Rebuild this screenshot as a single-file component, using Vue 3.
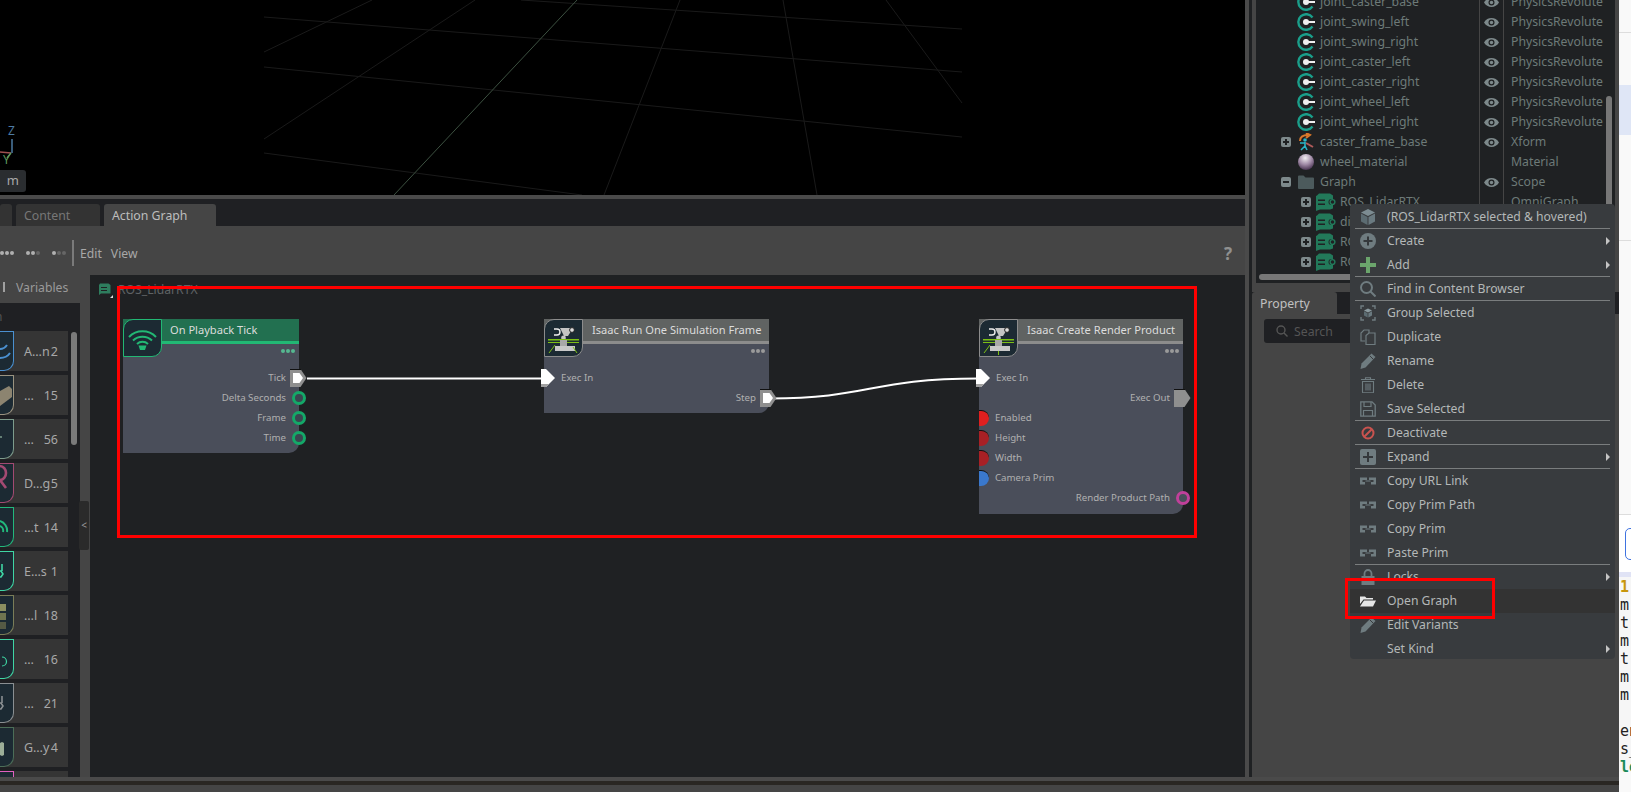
<script setup>
const G = '#6f7c80'
const icons = {
  cube: [
    { d: 'M8 0L15 3.5 8 7 1 3.5Z', f: '#7c8c92' },
    { d: 'M1 4.5L7.5 8V16L1 12.5Z', f: '#5c6c72' },
    { d: 'M8.5 8L15 4.5V12.5L8.5 16Z', f: '#6a7a80' }
  ],
  create: [
    { d: 'M8 0a8 8 0 1 0 0 16a8 8 0 1 0 0-16Z', f: G },
    { d: 'M7 3.5h2V7h3.5v2H9v3.5H7V9H3.5V7H7Z', f: '#34383b' }
  ],
  add: [{ d: 'M6 0h4v6h6v4h-6v6H6v-6H0V6h6Z', f: '#6ba56c' }],
  find: [
    { d: 'M6.5 1a5.5 5.5 0 1 0 0 11a5.5 5.5 0 1 0 0-11Z', s: G, w: 2 },
    { d: 'M10.5 10.5L15.5 15.5', s: G, w: 2 }
  ],
  group: [
    { d: 'M1 4V1h3M12 1h3v3M15 12v3h-3M4 15H1v-3', s: G, w: 1.4 },
    { d: 'M8 3.5L12 5.5 8 7.5 4 5.5Z', f: '#8a9a9f' },
    { d: 'M4 6.2L7.6 8.2V12.5L4 10.5Z', f: '#5c6c72' },
    { d: 'M8.4 8.2L12 6.2V10.5L8.4 12.5Z', f: '#6a7a80' }
  ],
  dup: [
    { d: 'M1 9V4L4 1h5v3', s: G, w: 1.2 },
    { d: 'M1 9v3h4', s: G, w: 1.2 },
    { d: 'M6 6.5L9 4h6v11.5H6Z', s: G, w: 1.2 }
  ],
  pencil: [
    { d: 'M11.5 0.5L15.5 4 5.5 14.5 0.5 16 1.5 10.5Z', f: G },
    { d: 'M10 3L13.5 6.5', s: '#383b3e', w: 1 }
  ],
  trash: [
    { d: 'M2.5 4.5h11V15a.8.8 0 0 1-.8.8H3.3a.8.8 0 0 1-.8-.8Z', s: G, w: 1.1 },
    { d: 'M1 2.5h14M5.5 2.5V.8h5v1.7M6 6.5v7M8 6.5v7M10 6.5v7', s: G, w: 1.1 }
  ],
  save: [
    { d: 'M.8.8H12L15.2 4V15.2H.8Z', s: G, w: 1.3 },
    { d: 'M4 1v4.5h7V1M3.5 15V9.5h9V15', s: G, w: 1.2 }
  ],
  stop: [
    { d: 'M8 2.5a5.500 5.500 0 1 0 0 11a5.500 5.500 0 1 0 0-11Z', s: '#c9534f', w: 2 },
    { d: 'M4.200 11.800L11.800 4.200', s: '#c9534f', w: 2 }
  ],
  expand: [
    { d: 'M2 0h12a2 2 0 0 1 2 2v12a2 2 0 0 1-2 2H2a2 2 0 0 1-2-2V2a2 2 0 0 1 2-2Z', f: G },
    { d: 'M7 3h2v4h4v2H9v4H7V9H3V7h4Z', f: '#34383b' }
  ],
  link: [
    { d: 'M0 4.5h7V7H2.5v2H5v2.5H0Z', f: G },
    { d: 'M16 4.5H9V7h4.5v2H11v2.5h5Z', f: G },
    { d: 'M5.5 7.5h5v1h-5Z', f: G }
  ],
  lock: [
    { d: 'M1.5 7h13v9h-13Z', f: G },
    { d: 'M4.5 7V4.5a3.5 3.5 0 0 1 7 0V7', s: G, w: 1.8 }
  ],
  open: [
    { d: 'M0 3.5h5l1.5 1.5H13v1.5H3.5L0 11Z', f: '#e6e6e6' },
    { d: 'M4 7.5h12L13 13.5H0Z', f: '#e6e6e6' }
  ]
}

const menu = [
  { t: '(ROS_LidarRTX selected & hovered)', i: 'cube', sep: 1 },
  { t: 'Create', i: 'create', sub: 1 },
  { t: 'Add', i: 'add', sub: 1, sep: 1 },
  { t: 'Find in Content Browser', i: 'find', sep: 1 },
  { t: 'Group Selected', i: 'group' },
  { t: 'Duplicate', i: 'dup' },
  { t: 'Rename', i: 'pencil' },
  { t: 'Delete', i: 'trash' },
  { t: 'Save Selected', i: 'save', sep: 1 },
  { t: 'Deactivate', i: 'stop', sep: 1 },
  { t: 'Expand', i: 'expand', sub: 1, sep: 1 },
  { t: 'Copy URL Link', i: 'link' },
  { t: 'Copy Prim Path', i: 'link' },
  { t: 'Copy Prim', i: 'link' },
  { t: 'Paste Prim', i: 'link', sep: 1 },
  { t: 'Locks', i: 'lock', sub: 1 },
  { t: 'Open Graph', i: 'open', hover: 1 },
  { t: 'Edit Variants', i: 'pencil' },
  { t: 'Set Kind', sub: 1 }
]

const P = 'PhysicsRevolute'
const tree = [
  { n: 'joint_caster_base', k: 'joint', eye: 1, ty: P },
  { n: 'joint_swing_left', k: 'joint', eye: 1, ty: P },
  { n: 'joint_swing_right', k: 'joint', eye: 1, ty: P },
  { n: 'joint_caster_left', k: 'joint', eye: 1, ty: P },
  { n: 'joint_caster_right', k: 'joint', eye: 1, ty: P },
  { n: 'joint_wheel_left', k: 'joint', eye: 1, ty: P },
  { n: 'joint_wheel_right', k: 'joint', eye: 1, ty: P },
  { n: 'caster_frame_base', k: 'xform', eye: 1, ty: 'Xform', box: '+' },
  { n: 'wheel_material', k: 'sphere', ty: 'Material' },
  { n: 'Graph', k: 'folder', eye: 1, ty: 'Scope', box: '-' },
  { n: 'ROS_LidarRTX', k: 'graph', lv: 1, ty: 'OmniGraph', box: '+' },
  { n: 'differential', k: 'graph', lv: 1, ty: 'OmniGraph', box: '+' },
  { n: 'ROS_Camera', k: 'graph', lv: 1, ty: 'OmniGraph', box: '+' },
  { n: 'ROS_Clock', k: 'graph', lv: 1, ty: 'OmniGraph', box: '+' }
]

const palette = [
  { l: 'A…n', c: '2', col: '#4a90d0', g: 'M0 17c3 0 5-1 7-4M0 26c5 0 8-2 10-5', sw: 2 },
  { l: '…', c: '15', col: '#9a9380', g: 'M0 15l9-5 3 3v8l-12 9Z', fill: '#8c8470' },
  { l: '…', c: '56', col: '#7d9c8c', g: 'M0 17h2', sw: 1.5 },
  { l: 'D…g', c: '5', col: '#a24a72', g: 'M0 2a6 7 0 0 1 0 14M0 16l6 8', sw: 2.6 },
  { l: '…t', c: '14', col: '#22b87c', g: 'M0 13a10 10 0 0 1 7 11M0 18a5 5 0 0 1 3 6', sw: 2 },
  { l: 'E…s', c: '1', col: '#3fd6a4', g: 'M2 12v7M0 19h1l2 3-2 3H0', sw: 1.6 },
  { l: '…l', c: '18', col: '#7a7d58', rects: ['#8a8f60', '#6f7550', '#555a44'] },
  { l: '…', c: '16', col: '#3fd6a4', g: 'M2 17a4 4 0 0 1 0 9', sw: 1.2 },
  { l: '…', c: '21', col: '#8a8f92', g: 'M2 12v7M0 19h1l2 3-2 3H0', sw: 1.6 },
  { l: 'G…y', c: '4', col: '#4c6e58', g: 'M0 15l2-1 2 1v12l-2 1-2-1Z', fill: '#9cae98' },
  { l: '', c: '', col: '#e060c0' }
]

const code = ['1', 'm', 't', 'm', 't', 'm', 'm', '\u00a0', 'en', 's_', 'le']
</script>

<template>
  <div class="app">
    <div class="main">
      <div class="columns">
        <div class="left">
          <div class="viewport">
            <svg class="grid" width="1245" height="195" viewBox="0 0 1245 195">
              <g stroke="#1a1a1a" stroke-width="1" fill="none">
                <path d="M521 0L962 29M264 17L962 72M264 67L962 137M264 153L582 195" />
                <path d="M264 52L372 0M264 139L475 0M604 195L680 0M817 195L783 0M886 0L962 103" />
              </g>
              <path d="M394 195L577 0" stroke="#3c5040" stroke-width="1" fill="none" />
              <path d="M12 139V153" stroke="#4d7ba3" stroke-width="1.5" />
              <path d="M0 152L11 153" stroke="#a05050" stroke-width="1.5" />
              <path d="M11 153L7 158" stroke="#5f9a5f" stroke-width="1.5" />
            </svg>
            <span class="axis z">Z</span>
            <span class="axis y">Y</span>
            <div class="unit">m</div>
          </div>
          <div class="split"></div>
          <div class="tabs">
            <span class="tab stub"></span>
            <span class="tab">Content</span>
            <span class="tab active">Action Graph</span>
          </div>
          <div class="toolbar">
            <div class="dots"><i></i><i></i><i></i></div>
            <div class="dots"><i></i><i></i><i class="off"></i></div>
            <div class="dots"><i></i><i class="off"></i><i class="off"></i></div>
            <span class="bar"></span>
            <span class="tool">Edit</span>
            <span class="tool">View</span>
            <span class="help">?</span>
          </div>
          <div class="body">
            <div class="palette">
              <div class="pal-head"><span class="pipe"></span><span>Variables</span></div>
              <div class="pal-list">
                <div class="pal-search">n</div>
                <div v-for="(p, i) in palette" :key="i" class="pal-item">
                  <div class="badge" :style="{ borderColor: p.col }">
                    <svg v-if="p.g || p.rects" width="14" height="40" viewBox="0 0 14 40">
                      <path v-if="p.g" :d="p.g" :fill="p.fill || 'none'" :stroke="p.fill ? 'none' : p.col" :stroke-width="p.sw || 0" />
                      <template v-if="p.rects">
                        <rect v-for="(r, j) in p.rects" :key="j" x="0" :y="8 + j * 9" width="6" height="7" :fill="r" />
                      </template>
                    </svg>
                  </div>
                  <span class="pal-label">{{ p.l }}</span>
                  <span class="pal-count">{{ p.c }}</span>
                </div>
              </div>
              <div class="pal-thumb"></div>
              <div class="pal-handle">&lt;</div>
            </div>
            <div class="canvas">
              <div class="crumb">
                <svg width="15" height="16" viewBox="0 0 15 16">
                  <path d="M2 1.500h8.500l2 1.500v8.500H3L1 13V3Z" fill="#2e7d5e" />
                  <path d="M3 5.500h6M3 8.500h6" stroke="#1f2123" stroke-width="1.200" />
                  <path d="M15 13v3h-3Z" fill="#ddd" />
                </svg>
                <span>ROS_LidarRTX</span>
              </div>

              <svg class="wires" width="1155" height="502" viewBox="0 0 1155 502">
                <path d="M217 103.5H453" stroke="#fff" stroke-width="2" fill="none" />
                <path d="M680 123.5C780 123.5 780 103.5 889 103.5" stroke="#fff" stroke-width="2" fill="none" />
              </svg>

              <div class="node tick">
                <div class="node-icon">
                  <svg width="37" height="36" viewBox="0 0 37 36">
                    <g fill="none" stroke="#22b874" stroke-width="2">
                      <path d="M5 17a19 19 0 0 1 27 0" />
                      <path d="M9 20.5a14 14 0 0 1 19 0" />
                      <path d="M13 24a8 8 0 0 1 11 0" />
                    </g>
                    <path d="M14.5 25.5h8l-1.5 4.5h-5Z" fill="#22b874" />
                  </svg>
                </div>
                <div class="node-title">On Playback Tick</div>
                <div class="node-dots"><i></i><i></i><i></i></div>
                <div class="row out"><span>Tick</span>
                  <svg class="port-exec" width="17" height="18" viewBox="0 0 17 18">
                    <path d="M0 0H10.5L16.5 9 10.5 18H0Z" fill="#8f8f8f" />
                    <path d="M0 0H11V1H0Z" fill="#111" />
                    <path d="M3 4H9.5L13 9 9.5 14H3Z" fill="#fff" />
                  </svg>
                </div>
                <div class="row out"><span>Delta Seconds</span><i class="ring green"></i></div>
                <div class="row out"><span>Frame</span><i class="ring green"></i></div>
                <div class="row out"><span>Time</span><i class="ring green"></i></div>
              </div>

              <div class="node isaac run">
                <div class="node-icon">
                  <svg width="37" height="36" viewBox="0 0 37 36">
                    <path d="M9 9h3a3 3 0 0 1 0 6H9" fill="none" stroke="#eee" stroke-width="1.4" />
                    <path d="M15 8h13l-5 8h-4Z" fill="#c4c4c4" />
                    <circle cx="27" cy="10" r="2.4" fill="#ddd" stroke="#222" />
                    <circle cx="18.500" cy="18" r="2.4" fill="#c4c4c4" />
                    <path d="M3 19h31v1.500H3ZM3 22h31v1H3Z" fill="#7cc014" />
                    <path d="M15 20h7v6h-7Z" fill="#a8a8a8" />
                    <path d="M10 26h20v5H10Z" fill="#c8c8c8" />
                    <path d="M4 33l6-8M32 33l-4-6" stroke="#7cc014" stroke-width="1" />
                  </svg>
                </div>
                <div class="node-title">Isaac Run One Simulation Frame</div>
                <div class="node-dots"><i></i><i></i><i></i></div>
                <div class="row in">
                  <svg class="port-in" width="15" height="18" viewBox="0 0 15 18">
                    <path d="M0 0H5L14 9 5 18H0Z" fill="#fff" />
                    <path d="M0 15H8L5 18H0Z" fill="#a0a0a0" />
                  </svg>
                  <span>Exec In</span>
                </div>
                <div class="row out"><span>Step</span>
                  <svg class="port-exec" width="17" height="18" viewBox="0 0 17 18">
                    <path d="M0 0H10.5L16.5 9 10.5 18H0Z" fill="#8f8f8f" />
                    <path d="M0 0H11V1H0Z" fill="#111" />
                    <path d="M3 4H9.5L13 9 9.5 14H3Z" fill="#fff" />
                  </svg>
                </div>
              </div>

              <div class="node isaac render">
                <div class="node-icon">
                  <svg width="37" height="36" viewBox="0 0 37 36">
                    <path d="M9 9h3a3 3 0 0 1 0 6H9" fill="none" stroke="#eee" stroke-width="1.4" />
                    <path d="M15 8h13l-5 8h-4Z" fill="#c4c4c4" />
                    <circle cx="27" cy="10" r="2.400" fill="#ddd" stroke="#222" />
                    <circle cx="18.500" cy="18" r="2.400" fill="#c4c4c4" />
                    <path d="M3 19h31v1.500H3ZM3 22h31v1H3Z" fill="#7cc014" />
                    <path d="M15 20h7v6h-7Z" fill="#a8a8a8" />
                    <path d="M10 26h20v5H10Z" fill="#c8c8c8" />
                    <path d="M4 33l6-8M18.500 31v4" stroke="#7cc014" stroke-width="1" />
                  </svg>
                </div>
                <div class="node-title">Isaac Create Render Product</div>
                <div class="node-dots"><i></i><i></i><i></i></div>
                <div class="row in">
                  <svg class="port-in" width="15" height="18" viewBox="0 0 15 18">
                    <path d="M0 0H5L14 9 5 18H0Z" fill="#fff" />
                    <path d="M0 15H8L5 18H0Z" fill="#a0a0a0" />
                  </svg>
                  <span>Exec In</span>
                </div>
                <div class="row out"><span>Exec Out</span>
                  <svg class="port-exec" width="17" height="18" viewBox="0 0 17 18">
                    <path d="M0 0H10.5L16.5 9 10.5 18H0Z" fill="#8f8f8f" />
                    <path d="M0 0H11V1H0Z" fill="#111" />
                  </svg>
                </div>
                <div class="row data"><i class="half red"></i><span>Enabled</span></div>
                <div class="row data"><i class="half maroon"></i><span>Height</span></div>
                <div class="row data"><i class="half maroon"></i><span>Width</span></div>
                <div class="row data"><i class="half blue"></i><span>Camera Prim</span></div>
                <div class="row out"><span>Render Product Path</span><i class="ring pink"></i></div>
              </div>
            </div>
          </div>
        </div>

        <div class="gut"></div>
        <div class="gut-dark"></div>

        <div class="right">
          <div class="stage">
            <div class="tree">
              <div v-for="r in tree" :key="r.n" class="tree-row">
                <div class="cell-name" :class="r.lv ? 'lv1' : 'lv0'">
                  <span class="box" :class="{ ghost: !r.box }">
                    <i v-if="r.box"></i><b v-if="r.box === '+'"></b>
                  </span>
                  <svg v-if="r.k === 'joint'" class="ti" width="18" height="18" viewBox="0 0 18 18">
                    <path d="M15.500 4.500a7.800 7.800 0 1 0 0 9" fill="none" stroke="#1a9e8a" stroke-width="2.400" />
                    <circle cx="9" cy="9" r="3" fill="#eee" />
                    <path d="M9 8h9v2H9Z" fill="#eee" />
                  </svg>
                  <svg v-else-if="r.k === 'xform'" class="ti" width="18" height="18" viewBox="0 0 18 18">
                    <path d="M3 8c0-4 3-6 8-6M9 0l4 2-4 3" fill="none" stroke="#d9782a" stroke-width="2" />
                    <circle cx="8" cy="7" r="1.800" fill="#29b6c9" />
                    <path d="M8 9v4l-4 4M8 13l2 4M3 10h5" fill="none" stroke="#29b6c9" stroke-width="1.600" />
                    <path d="M9 10l7 4" stroke="#b05a5a" stroke-width="2" />
                  </svg>
                  <svg v-else-if="r.k === 'sphere'" class="ti" width="18" height="18" viewBox="0 0 18 18">
                    <defs>
                      <radialGradient id="sph" cx="45%" cy="25%" r="75%">
                        <stop offset="0" stop-color="#f2eef2" />
                        <stop offset=".55" stop-color="#a08aa6" />
                        <stop offset="1" stop-color="#4a3552" />
                      </radialGradient>
                    </defs>
                    <circle cx="9" cy="9" r="8" fill="url(#sph)" />
                  </svg>
                  <svg v-else-if="r.k === 'folder'" class="ti" width="18" height="18" viewBox="0 0 18 18">
                    <path d="M1 3.500a1 1 0 0 1 1-1h4.500l2 2H16a1 1 0 0 1 1 1V15a1 1 0 0 1-1 1H2a1 1 0 0 1-1-1Z" fill="#4c5a5c" />
                  </svg>
                  <svg v-else class="ti" width="20" height="18" viewBox="0 0 20 18">
                    <path d="M1 2.500L3 .5h11l3 2V6h-1.500a3 3 0 0 0 0 6H17v3.500l-3 1H4L0 18V3Z" fill="#22795a" />
                    <path d="M2 6.500h7V8H2ZM2 10.500h7V12H2Z" fill="#1f2123" />
                    <circle cx="16.500" cy="9" r="2.400" fill="none" stroke="#22795a" stroke-width="1.400" />
                  </svg>
                  <span class="tree-text">{{ r.n }}</span>
                </div>
                <div class="cell-eye">
                  <svg v-if="r.eye" width="15" height="11" viewBox="0 0 14 10">
                    <path d="M0 5c3-5.500 11-5.500 14 0c-3 5.500-11 5.500-14 0Z" fill="#7d898b" />
                    <circle cx="7" cy="5" r="2.800" fill="#1f2123" />
                    <circle cx="7" cy="5" r="1.600" fill="#7d898b" />
                  </svg>
                </div>
                <div class="cell-type">{{ r.ty }}</div>
              </div>
            </div>
            <div class="vthumb"></div>
            <div class="hthumb"></div>
          </div>
          <div class="prop-tabs"><span class="prop-tab">Property</span></div>
          <div class="prop-body">
            <div class="search">
              <svg width="12" height="12" viewBox="0 0 12 12">
                <circle cx="5" cy="5" r="4" fill="none" stroke="#555" stroke-width="1.400" />
                <path d="M8 8l3.500 3.500" stroke="#555" stroke-width="1.400" />
              </svg>
              <span>Search</span>
            </div>
          </div>
        </div>
      </div>
      <div class="footer"><div class="foot-a"></div><div class="foot-b"></div><div class="foot-c"></div></div>
    </div>

    <div class="browser">
      <div class="b-top"></div>
      <div class="b-blue"></div>
      <div class="b-mid"></div>
      <div class="b-gap"></div>
      <div class="b-btnrow"><div class="b-btn"></div></div>
      <div class="b-strip"></div>
      <div class="b-code">
        <div v-for="(c, i) in code" :key="i" class="code-line" :class="{ num: i === 0, kw: i === 10 }">{{ c }}</div>
      </div>
    </div>

    <div class="menu">
      <div v-for="m in menu" :key="m.t" class="mi" :class="{ hover: m.hover, sep: m.sep }">
        <svg v-if="m.i" class="mi-icon" width="16" height="16" viewBox="0 0 16 16">
          <path v-for="(p, j) in icons[m.i]" :key="j" :d="p.d" :fill="p.f || 'none'" :stroke="p.s || 'none'" :stroke-width="p.w || 0" />
        </svg>
        <span v-else class="mi-icon"></span>
        <span class="mi-text">{{ m.t }}</span>
        <i v-if="m.sub" class="arrow"></i>
      </div>
    </div>

    <div class="mark mark-graph"></div>
    <div class="mark mark-menu"></div>
  </div>
</template>

<style>
html, body { margin: 0; padding: 0; background: #454545; overflow: hidden; }
</style>

<style scoped>
.app {
  position: relative;
  display: flex;
  width: 1631px;
  height: 792px;
  overflow: hidden;
  background: #454545;
  font-family: "Noto Sans", sans-serif;
  font-size: 13px;
}
.main { width: 1619px; display: flex; flex-direction: column; flex: none; }
.columns { display: flex; height: 777px; flex: none; }
.left { width: 1245px; flex: none; display: flex; flex-direction: column; }
.gut { width: 4px; flex: none; background: #4a4a4a; }
.gut-dark { width: 3px; flex: none; background: #1f2123; }

.viewport { position: relative; height: 195px; flex: none; background: #000; overflow: hidden; }
.grid { position: absolute; left: 0; top: 0; }
.axis { position: absolute; font-size: 12px; line-height: 14px; }
.axis.z { left: 8px; top: 124px; color: #4d7ba3; }
.axis.y { left: 3px; top: 153px; color: #5f9a5f; }
.unit {
  position: absolute;
  left: 0;
  top: 170px;
  width: 26px;
  height: 22px;
  background: #2a2d30;
  border-radius: 0 3px 3px 0;
  color: #a8a8a8;
  font-size: 13px;
  line-height: 21px;
  text-align: right;
  padding-right: 7px;
  box-sizing: border-box;
}
.split { height: 4px; flex: none; background: #4a4a4a; }
.tabs { height: 27px; flex: none; background: #1f2023; display: flex; align-items: flex-end; gap: 4px; }
.tab {
  height: 22px;
  width: 84px;
  box-sizing: border-box;
  padding-left: 8px;
  background: #333;
  color: #777;
  border-radius: 3px 3px 0 0;
  font-size: 12.3px;
  line-height: 23px;
}
.tab.stub { width: 12px; padding: 0; }
.tab.active { width: 112px; background: #454545; color: #bdbdbd; }

.toolbar { height: 49px; box-sizing: border-box; padding-top: 5px; flex: none; background: #454545; display: flex; align-items: center; position: relative; }
.dots { display: flex; gap: 1px; width: 14px; margin-right: 12px; }
.dots i { width: 4px; height: 4px; border-radius: 50%; background: #b0b0b0; flex: none; }
.dots i.off { background: #666; }
.bar { width: 2px; height: 26px; background: #7a7a7a; margin: 0 6px 0 -6px; }
.tool { color: #a8a8a8; font-size: 12.200px; margin-right: 9px; }
.help { margin-left: auto; margin-right: 13px; font-weight: 700; font-size: 17px; color: #909090; }

.body { flex: 1; display: flex; min-height: 0; }
.palette { width: 90px; flex: none; position: relative; display: flex; flex-direction: column; }
.pal-head { height: 28px; box-sizing: border-box; padding-bottom: 4px; flex: none; display: flex; align-items: center; color: #9a9a9a; font-size: 12.200px; }
.pipe { width: 2px; height: 10px; background: #a0a0a0; margin: 0 11px 0 3px; }
.pal-list { width: 80px; flex: 1; background: #1f2023; overflow: hidden; min-height: 0; }
.pal-search { height: 28px; font-size: 12px; line-height: 28px; color: #555; margin-left: -5px; }
.pal-item {
  width: 68px;
  height: 40px;
  margin-bottom: 4px;
  background: #353535;
  display: flex;
  align-items: center;
  color: #a8a8a8;
  font-size: 12.500px;
  white-space: nowrap;
}
.badge {
  width: 14px;
  height: 40px;
  flex: none;
  box-sizing: border-box;
  background: #1c2a33;
  border: 1px solid;
  border-left: 0;
  border-radius: 0 0 10px 0;
  overflow: hidden;
}
.badge svg { display: block; }
.pal-label { margin-left: 10px; white-space: nowrap; }
.pal-count { margin-left: auto; margin-right: 10px; }
.pal-thumb { position: absolute; left: 71px; top: 57px; width: 6px; height: 113px; border-radius: 3px; background: #7a7a7a; }
.pal-handle {
  position: absolute;
  left: 79px;
  top: 226px;
  width: 10px;
  height: 49px;
  background: #2a2a2a;
  border-radius: 2px;
  color: #9a9a9a;
  font-size: 10px;
  line-height: 49px;
  text-align: center;
}

.canvas { position: relative; flex: 1; background: #1f2123; overflow: hidden; }
.crumb { position: absolute; left: 8px; top: 7px; display: flex; align-items: center; gap: 5px; color: #5f6365; font-size: 12.200px; line-height: 16px; }
.wires { position: absolute; left: 0; top: 0; }

.node { position: absolute; top: 44px; background: #4a4e5a; border-bottom-right-radius: 10px; padding-bottom: 5px; }
.node.tick { left: 33px; width: 176px; }
.node.run { left: 454px; width: 225px; }
.node.render { left: 889px; width: 204px; padding-bottom: 6px; }
.node-icon {
  position: absolute;
  left: 0;
  top: 0;
  width: 39px;
  height: 38px;
  box-sizing: border-box;
  border: 1px solid #8c8c8c;
  background: #1c2a33;
  border-radius: 10px 0 10px 0;
}
.node-icon svg { display: block; }
.tick .node-icon { border-color: #22b874; }
.node-title {
  height: 22px;
  box-sizing: content-box;
  border-bottom: 3px solid #8c8c8c;
  background: #606362;
  color: #dcdcdc;
  font-size: 11.100px;
  line-height: 21px;
  padding-left: 48px;
  white-space: nowrap;
  overflow: hidden;
}
.tick .node-title { background: #227050; border-color: #22b874; padding-left: 47px; }
.node-dots { height: 24px; display: flex; justify-content: flex-end; gap: 1px; padding: 5px 4px 0 0; box-sizing: border-box; }
.node-dots i { width: 4px; height: 4px; border-radius: 50%; background: #9a9a9a; }
.tick .node-dots i { background: #55b890; }
.row { height: 20px; position: relative; display: flex; align-items: center; color: #b0b0b0; font-size: 9.700px; line-height: 20px; white-space: nowrap; }
.row.out { justify-content: flex-end; padding-right: 13px; }
.row.in { padding-left: 17px; }
.row.data { padding-left: 16px; }
.port-exec { position: absolute; right: -8px; top: 1px; }
.port-in { position: absolute; left: -3px; top: 1px; }
.ring { position: absolute; right: -7px; top: 3px; width: 14px; height: 14px; box-sizing: border-box; border-radius: 50%; border: 3px solid; background: #3a4650; }
.ring.green { border-color: #14a868; }
.ring.pink { border-color: #c0409a; background: #4a4e5a; }
.half { position: absolute; left: 0; top: 2px; width: 10px; height: 16px; box-sizing: border-box; border-top: 1px solid #111; border-radius: 0 9px 9px 0; }
.half.red { background: #e01f1f; }
.half.maroon { background: #a82025; }
.half.blue { background: #3a78cc; }

.right { width: 367px; flex: none; display: flex; flex-direction: column; }
.stage { position: relative; height: 283px; flex: none; margin: 0 4px; background: #1f2123; overflow: hidden; }
.tree { margin-top: -8px; }
.tree-row { display: grid; grid-template-columns: 223px 24px 1fr; height: 20px; }
.cell-name { display: flex; align-items: center; min-width: 0; overflow: hidden; }
.cell-name.lv0 { padding-left: 25px; gap: 6px; }
.cell-name.lv1 { padding-left: 45px; gap: 5px; }
.box { width: 10px; height: 10px; flex: none; background: #7d898b; border-radius: 2px; position: relative; }
.box.ghost { visibility: hidden; }
.box i { position: absolute; left: 2px; top: 4px; width: 6px; height: 2px; background: #1f2123; }
.box b { position: absolute; left: 4px; top: 2px; width: 2px; height: 6px; background: #1f2123; }
.ti { flex: none; }
.tree-text { color: #6d7a78; font-size: 12.250px; margin-left: -1px; padding-bottom: 1px; white-space: nowrap; }
.cell-eye { border-left: 1px solid #454545; display: flex; align-items: center; justify-content: center; }
.cell-type { border-left: 1px solid #454545; color: #6d7a78; font-size: 12.250px; line-height: 19px; padding-left: 7px; white-space: nowrap; }
.vthumb { position: absolute; left: 350px; top: 96px; width: 6px; height: 174px; background: #777; border-radius: 3px; }
.hthumb { position: absolute; left: 3px; top: 274px; width: 100px; height: 6px; background: #777; border-radius: 3px; }
.prop-tabs { margin-top: 9px; height: 22px; flex: none; background: #1f2023; }
.prop-tab {
  display: block;
  width: 85px;
  height: 22px;
  background: #454545;
  border-radius: 3px 3px 0 0;
  color: #c0c0c0;
  font-size: 12.250px;
  line-height: 24px;
  padding-left: 8px;
  box-sizing: border-box;
}
.prop-body { flex: 1; padding: 5px 0 0 12px; }
.search { height: 24px; width: 300px; background: #1f2023; border-radius: 3px; display: flex; align-items: center; gap: 6px; padding-left: 12px; color: #555; font-size: 12.250px; box-sizing: border-box; }

.footer { flex: 1; display: flex; flex-direction: column; }
.foot-a { height: 4px; background: #4a4a4a; }
.foot-b { height: 4px; background: #2a2723; }
.foot-c { flex: 1; background: #454545; }

.browser { flex: 1; min-width: 0; background: #f9f9f9; display: flex; flex-direction: column; overflow: hidden; }
.b-top { height: 32px; border-bottom: 1px solid #ddd; flex: none; }
.b-blue { height: 50px; margin-top: 52px; background: #dfe6f6; flex: none; }
.b-mid { height: 105px; border-bottom: 1px solid #ddd; flex: none; }
.b-gap { height: 273px; border-bottom: 1px solid #ddd; flex: none; }
.b-btnrow { height: 57px; flex: none; padding: 13px 0 0 6px; box-sizing: border-box; background: #fff; }
.b-btn { width: 30px; height: 32px; border: 1px solid #3f73e0; border-radius: 5px; background: #fff; box-sizing: border-box; }
.b-strip { height: 5px; flex: none; background: #e0e3f5; }
.b-code { height: 195px; flex: none; background: #f6f6f6; padding-top: 1px; box-sizing: border-box; }
.code-line { height: 18px; font-family: "DejaVu Sans Mono", monospace; font-size: 15px; line-height: 18px; color: #222; white-space: nowrap; padding-left: 1px; }
.code-line.num { color: #c8960c; font-weight: 700; }
.code-line.kw { color: #1a8a5a; font-weight: 700; }

.menu {
  position: absolute;
  left: 1350px;
  top: 204px;
  width: 265px;
  height: 455px;
  padding-top: 1px;
  box-sizing: border-box;
  background: #383b3e;
  border-radius: 4px;
  overflow: hidden;
}
.mi { position: relative; height: 24px; display: flex; align-items: center; color: #b4b8b8; font-size: 12.200px; }
.mi.sep::after { content: ""; position: absolute; left: 5px; right: 5px; bottom: 0; height: 1px; background: #7a7d7e; }
.mi.hover { background: #333333; }
.mi-icon { width: 16px; height: 16px; flex: none; margin-left: 10px; display: block; }
.mi-text { margin-left: 11px; padding-bottom: 2px; white-space: nowrap; }
.arrow { position: absolute; right: 5px; top: 8px; width: 0; height: 0; border-left: 4px solid #c4c4c4; border-top: 4px solid transparent; border-bottom: 4px solid transparent; }

.mark { position: absolute; box-sizing: border-box; border: 3px solid #f00; pointer-events: none; }
.mark-graph { left: 117px; top: 286px; width: 1080px; height: 252px; }
.mark-menu { left: 1345px; top: 578px; width: 150px; height: 41px; }
</style>
